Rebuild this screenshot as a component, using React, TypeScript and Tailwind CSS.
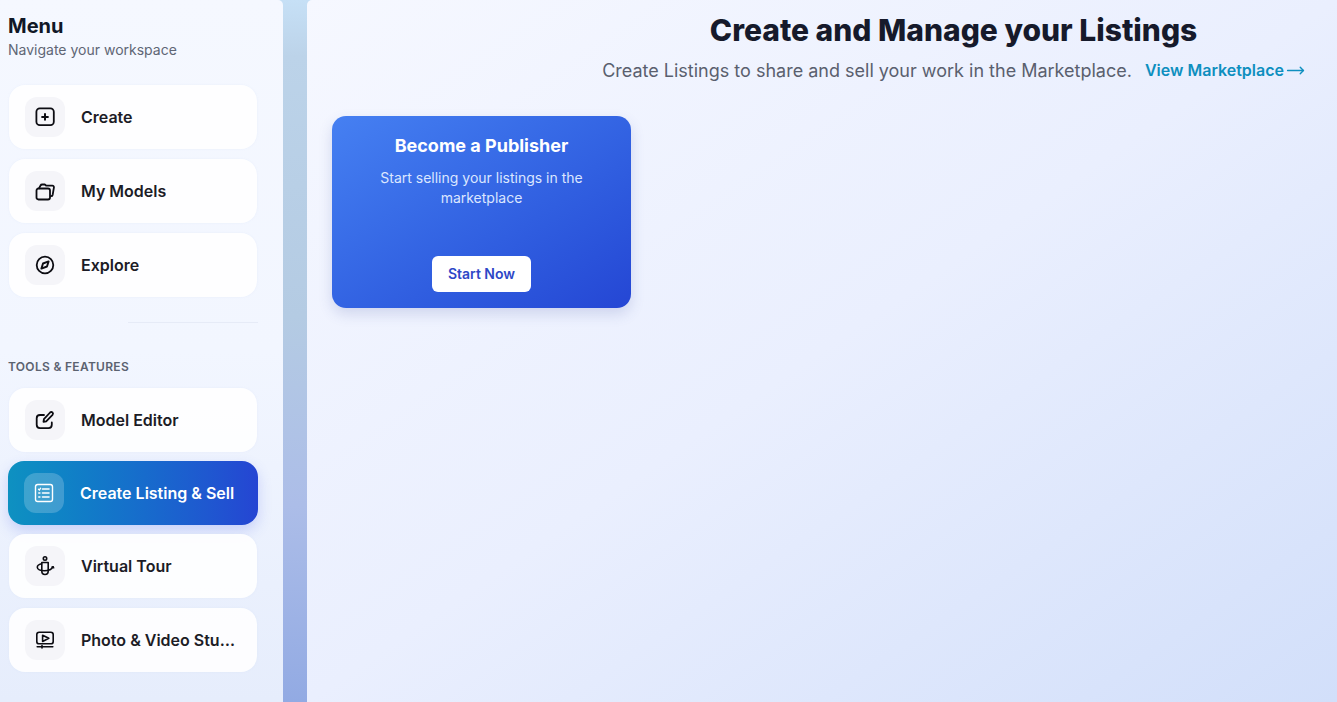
import { MoveRight } from "lucide-react";
import type { ReactNode } from "react";

const PlusIcon = () => (
  <svg width="20" height="20" viewBox="0 0 20 20" fill="none" stroke="currentColor" strokeWidth="1.800" strokeLinecap="round">
    <rect x="1.400" y="1.400" width="17.400" height="16.800" rx="3.400" />
    <path d="M10 7v5.800M7.100 9.900h5.800" strokeWidth="2" />
  </svg>
);

const FoldersIcon = () => (
  <svg width="20" height="20" viewBox="0 0 20 20" fill="none" stroke="currentColor" strokeWidth="1.800" strokeLinejoin="round" strokeLinecap="round">
    <path d="M1.500 16.500V9.500c0-1.200.8-2 2-2H13c1.200 0 2 .8 2 2v7c0 1.200-.8 2-2 2H3.500c-1.200 0-2-.8-2-2Z" />
    <path d="M4 7.300 5.500 4.500c.4-.8 1-1 1.800-1h2.500l1.500 1.200h6c1.200 0 1.800.8 1.600 2l-1.200 7c-.2 1-.8 1.500-1.700 1.500" />
  </svg>
);

const CompassIcon = () => (
  <svg width="20" height="20" viewBox="0 0 20 20" fill="none" stroke="currentColor" strokeWidth="1.800" strokeLinejoin="round">
    <circle cx="10" cy="10" r="8.300" />
    <path d="M13.600 6.400 12 11.500 6.400 13.600 8 8.500Z" strokeWidth="1.900" />
  </svg>
);

const EditIcon = () => (
  <svg width="20" height="20" viewBox="0 0 20 20" fill="none" stroke="currentColor" strokeWidth="1.800" strokeLinejoin="round" strokeLinecap="round">
    <path d="M9 5H5C3 5 1.700 6.300 1.700 8.300v6.500c0 2 1.300 3.300 3.300 3.300h8.500c2 0 3.300-1.300 3.300-3.300v-2.300" />
    <path d="m8.500 11.800.4-2.600 6.200-6.700c.7-.7 1.800-.7 2.400 0 .6.600.6 1.600 0 2.300l-6.300 6.500Z" />
  </svg>
);

const ListingIcon = () => (
  <svg width="20" height="20" viewBox="0 0 20 20" fill="none" stroke="currentColor" strokeWidth="1.400" strokeLinecap="round">
    <rect x="1.500" y="1.500" width="17" height="17" rx="2.200" />
    <path d="M8.500 6h6.500M8.500 10h6.500M8.500 14h6.500" strokeWidth="1.600" />
    <path d="M4.500 6.200 5.400 7l1.200-1.800M4.700 10h1.300M4.700 14h1.300" strokeWidth="1.300" />
  </svg>
);

const TourIcon = () => (
  <svg width="20" height="20" viewBox="0 0 20 20" fill="none" stroke="currentColor" strokeWidth="1.600" strokeLinecap="round" strokeLinejoin="round">
    <circle cx="10" cy="2.500" r="1.700" />
    <path d="M6.800 6.500h6.400V15c0 2-1.400 3.500-3.200 3.500S6.800 17 6.800 15Z" />
    <path d="M6.500 7.800C3.800 8.500 2.300 9.800 2.300 11.200c0 2 3 3.500 7 3.500s7.500-1.300 8.700-3.800" />
    <path d="m16.800 11.200 1.400-.6.600 1.400" strokeWidth="1.300" />
  </svg>
);

const StudioIcon = () => (
  <svg width="20" height="20" viewBox="0 0 20 20" fill="none" stroke="currentColor" strokeWidth="1.600" strokeLinejoin="round" strokeLinecap="round">
    <rect x="1.800" y="2.200" width="16.400" height="11.600" rx="2.400" />
    <path d="M7.600 5.200 13.800 8.300 7.600 11.500Z" />
    <path d="M2.200 16.800h15.600M7 15.600v2.400" />
  </svg>
);

type Item = { label: string; icon: ReactNode; active?: boolean };

const topItems: Item[] = [
  { label: "Create", icon: <PlusIcon /> },
  { label: "My Models", icon: <FoldersIcon /> },
  { label: "Explore", icon: <CompassIcon /> },
];

const toolItems: Item[] = [
  { label: "Model Editor", icon: <EditIcon /> },
  { label: "Create Listing & Sell", icon: <ListingIcon />, active: true },
  { label: "Virtual Tour", icon: <TourIcon /> },
  { label: "Photo & Video Studio", icon: <StudioIcon /> },
];

const MenuItem = ({ item }: { item: Item }) => {
  if (item.active) {
    return (
      <div className="flex h-16 w-[250px] items-center gap-4 rounded-2xl bg-gradient-to-r from-[#0e91c1] to-[#2545d3] pl-4 pr-[20px] text-white shadow-[0_6px_14px_rgba(70,90,230,0.22)]">
        <div className="flex h-10 w-10 shrink-0 items-center justify-center rounded-xl bg-white/20">{item.icon}</div>
        <span className="truncate text-base font-semibold">{item.label}</span>
      </div>
    );
  }
  return (
    <div className="ml-px flex h-16 w-[248px] items-center gap-4 rounded-2xl bg-white/90 pl-4 pr-[21px] text-[#1c1c26] shadow-[0_0_2px_rgba(205,215,240,0.25)]">
      <div className="flex h-10 w-10 shrink-0 items-center justify-center rounded-xl bg-[#f5f5f9] text-[#0c0c12]">{item.icon}</div>
      <span className="truncate text-base font-semibold">{item.label}</span>
    </div>
  );
};

export default function App() {
  return (
    <div className="flex h-screen w-full overflow-hidden bg-[linear-gradient(to_bottom,#c6e0f6_0%,#bcd3e9_8%,#b4cbe3_45%,#acbde8_72%,#92aae3_100%)] font-['Inter',sans-serif]">
      <aside className="h-full w-[283px] shrink-0 rounded-tr-[5px] bg-gradient-to-b from-[#f5f8ff] via-[#f2f6ff] to-[#e6edfc] pl-2 pt-[14px]">
        <h2 className="text-xl font-bold leading-6 text-[#111827]">Menu</h2>
        <p className="mt-[2px] text-sm leading-5 text-[#5f6675]">Navigate your workspace</p>
        <div className="mt-[25px] flex flex-col gap-[10px]">
          {topItems.map((item) => (
            <MenuItem key={item.label} item={item} />
          ))}
        </div>
        <div className="ml-[120px] mt-[25px] h-px w-[130px] bg-[#e6ebf7]" />
        <h3 className="mt-[36px] text-xs font-semibold leading-4 tracking-[0.025em] text-[#5b6270]">TOOLS &amp; FEATURES</h3>
        <div className="mt-[13px] flex flex-col gap-[9px] [&>:last-child]:mt-px">
          {toolItems.map((item) => (
            <MenuItem key={item.label} item={item} />
          ))}
        </div>
      </aside>
      <main className="ml-6 h-full min-w-0 flex-1 rounded-tl-[5px] bg-gradient-to-br from-[#f6f8ff] via-[#eaeffe] to-[#d2dffa] pt-[12px]">
        <div className="ml-auto mr-[32px] flex w-fit flex-col">
          <h1 className="text-center text-3xl font-extrabold leading-9 text-[#161a2b]">Create and Manage your Listings</h1>
          <div className="mt-[9px] flex items-center gap-[13px]">
            <p className="text-lg leading-7 text-[#5a5f6e]">Create Listings to share and sell your work in the Marketplace.</p>
            <a className="mb-[2px] flex items-center gap-[2px] text-base font-semibold text-[#0e8fbf]">
              View Marketplace
              <MoveRight size={19} strokeWidth={1.8} />
            </a>
          </div>
        </div>
        <div className="ml-[25px] mt-[31px] flex h-[192px] w-[299px] flex-col items-center rounded-[14px] bg-gradient-to-br from-[#4680f2] to-[#2546d4] px-6 pb-4 pt-4 text-center shadow-[0_6px_14px_rgba(60,80,160,0.18)]">
          <h3 className="text-lg font-bold leading-7 text-white">Become a Publisher</h3>
          <p className="mt-[8px] text-sm leading-5 text-[#dbe6ff]">Start selling your listings in the marketplace</p>
          <button className="mt-auto h-9 w-[99px] rounded-md bg-white text-sm font-semibold text-[#2d47c7]">Start Now</button>
        </div>
      </main>
    </div>
  );
}
